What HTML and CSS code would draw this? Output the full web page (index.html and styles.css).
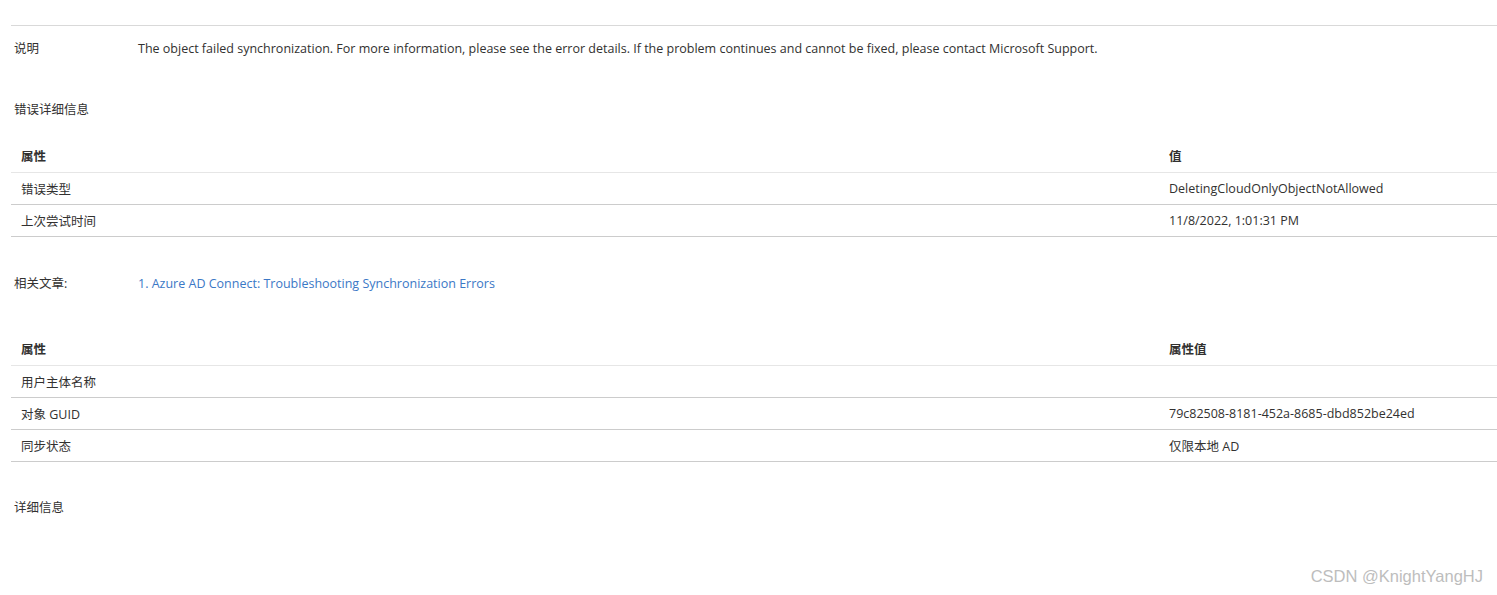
FILE: index.html
```html
<!DOCTYPE html>
<html lang="zh">
<head>
<meta charset="utf-8">
<link rel="stylesheet" href="styles.css">
</head>
<body>
<div class="page">
  <div class="rule"></div>
  <div class="field desc">
    <div class="label">说明</div>
    <div class="value">The object failed synchronization. For more information, please see the error details. If the problem continues and cannot be fixed, please contact Microsoft Support.</div>
  </div>
  <div class="section-title t1">错误详细信息</div>
  <div class="table t-err">
    <div class="row head"><div class="c1">属性</div><div class="c2">值</div></div>
    <div class="row"><div class="c1">错误类型</div><div class="c2">DeletingCloudOnlyObjectNotAllowed</div></div>
    <div class="row"><div class="c1">上次尝试时间</div><div class="c2">11/8/2022, 1:01:31 PM</div></div>
  </div>
  <div class="field related">
    <div class="label">相关文章:</div>
    <div class="value"><span class="num">1.</span> <a class="link" href="#">Azure AD Connect: Troubleshooting Synchronization Errors</a></div>
  </div>
  <div class="table t-attr">
    <div class="row head"><div class="c1">属性</div><div class="c2">属性值</div></div>
    <div class="row"><div class="c1">用户主体名称</div><div class="c2"></div></div>
    <div class="row"><div class="c1">对象 GUID</div><div class="c2">79c82508-8181-452a-8685-dbd852be24ed</div></div>
    <div class="row"><div class="c1">同步状态</div><div class="c2">仅限本地 AD</div></div>
  </div>
  <div class="section-title t2">详细信息</div>
</div>
<div class="watermark">CSDN @KnightYangHJ</div>
</body>
</html>
```
FILE: styles.css
```css
html, body {
  margin: 0;
  padding: 0;
  background: #ffffff;
}
body {
  font-family: "Segoe UI", "Open Sans", "Noto Sans CJK SC", sans-serif;
  font-size: 12.5px;
  color: #323130;
  width: 1497px;
  height: 595px;
  overflow: hidden;
  position: relative;
}
.page {
  padding-left: 11px;
  padding-top: 25px;
}
.rule {
  border-top: 1px solid #d9d9d9;
}
.field {
  display: flex;
  align-items: center;
  height: 20px;
  line-height: 20px;
}
.field .label {
  width: 124px;
  padding-left: 3px;
  flex-shrink: 0;
}
.desc {
  margin-top: 13px;
}
.section-title {
  padding-left: 3px;
  height: 20px;
  line-height: 20px;
}
.t1 {
  margin-top: 41px;
}
.table {
  display: flex;
  flex-direction: column;
}
.t-err {
  margin-top: 16px;
}
.row {
  display: flex;
  height: 32px;
  box-sizing: border-box;
  align-items: center;
  border-bottom: 1px solid #cccccc;
}
.row.head {
  height: 37px;
  padding-top: 2px;
  font-weight: 700;
  border-bottom-color: #e6e6e6;
}
.c1 {
  width: 1148px;
  padding-left: 10px;
  box-sizing: border-box;
  flex-shrink: 0;
}
.c2 {
  flex: 1;
  padding-left: 10px;
}
.related {
  margin-top: 37px;
}
.link {
  color: #3b78c6;
  text-decoration: none;
}
.num {
  color: #3b78c6;
}
.t-attr {
  margin-top: 35px;
}
.t2 {
  margin-top: 36px;
}
.watermark {
  position: absolute;
  right: 14px;
  bottom: 9px;
  font-family: "Liberation Sans", "Noto Sans", sans-serif;
  font-size: 16.5px;
  color: #bdbdbd;
}
```
